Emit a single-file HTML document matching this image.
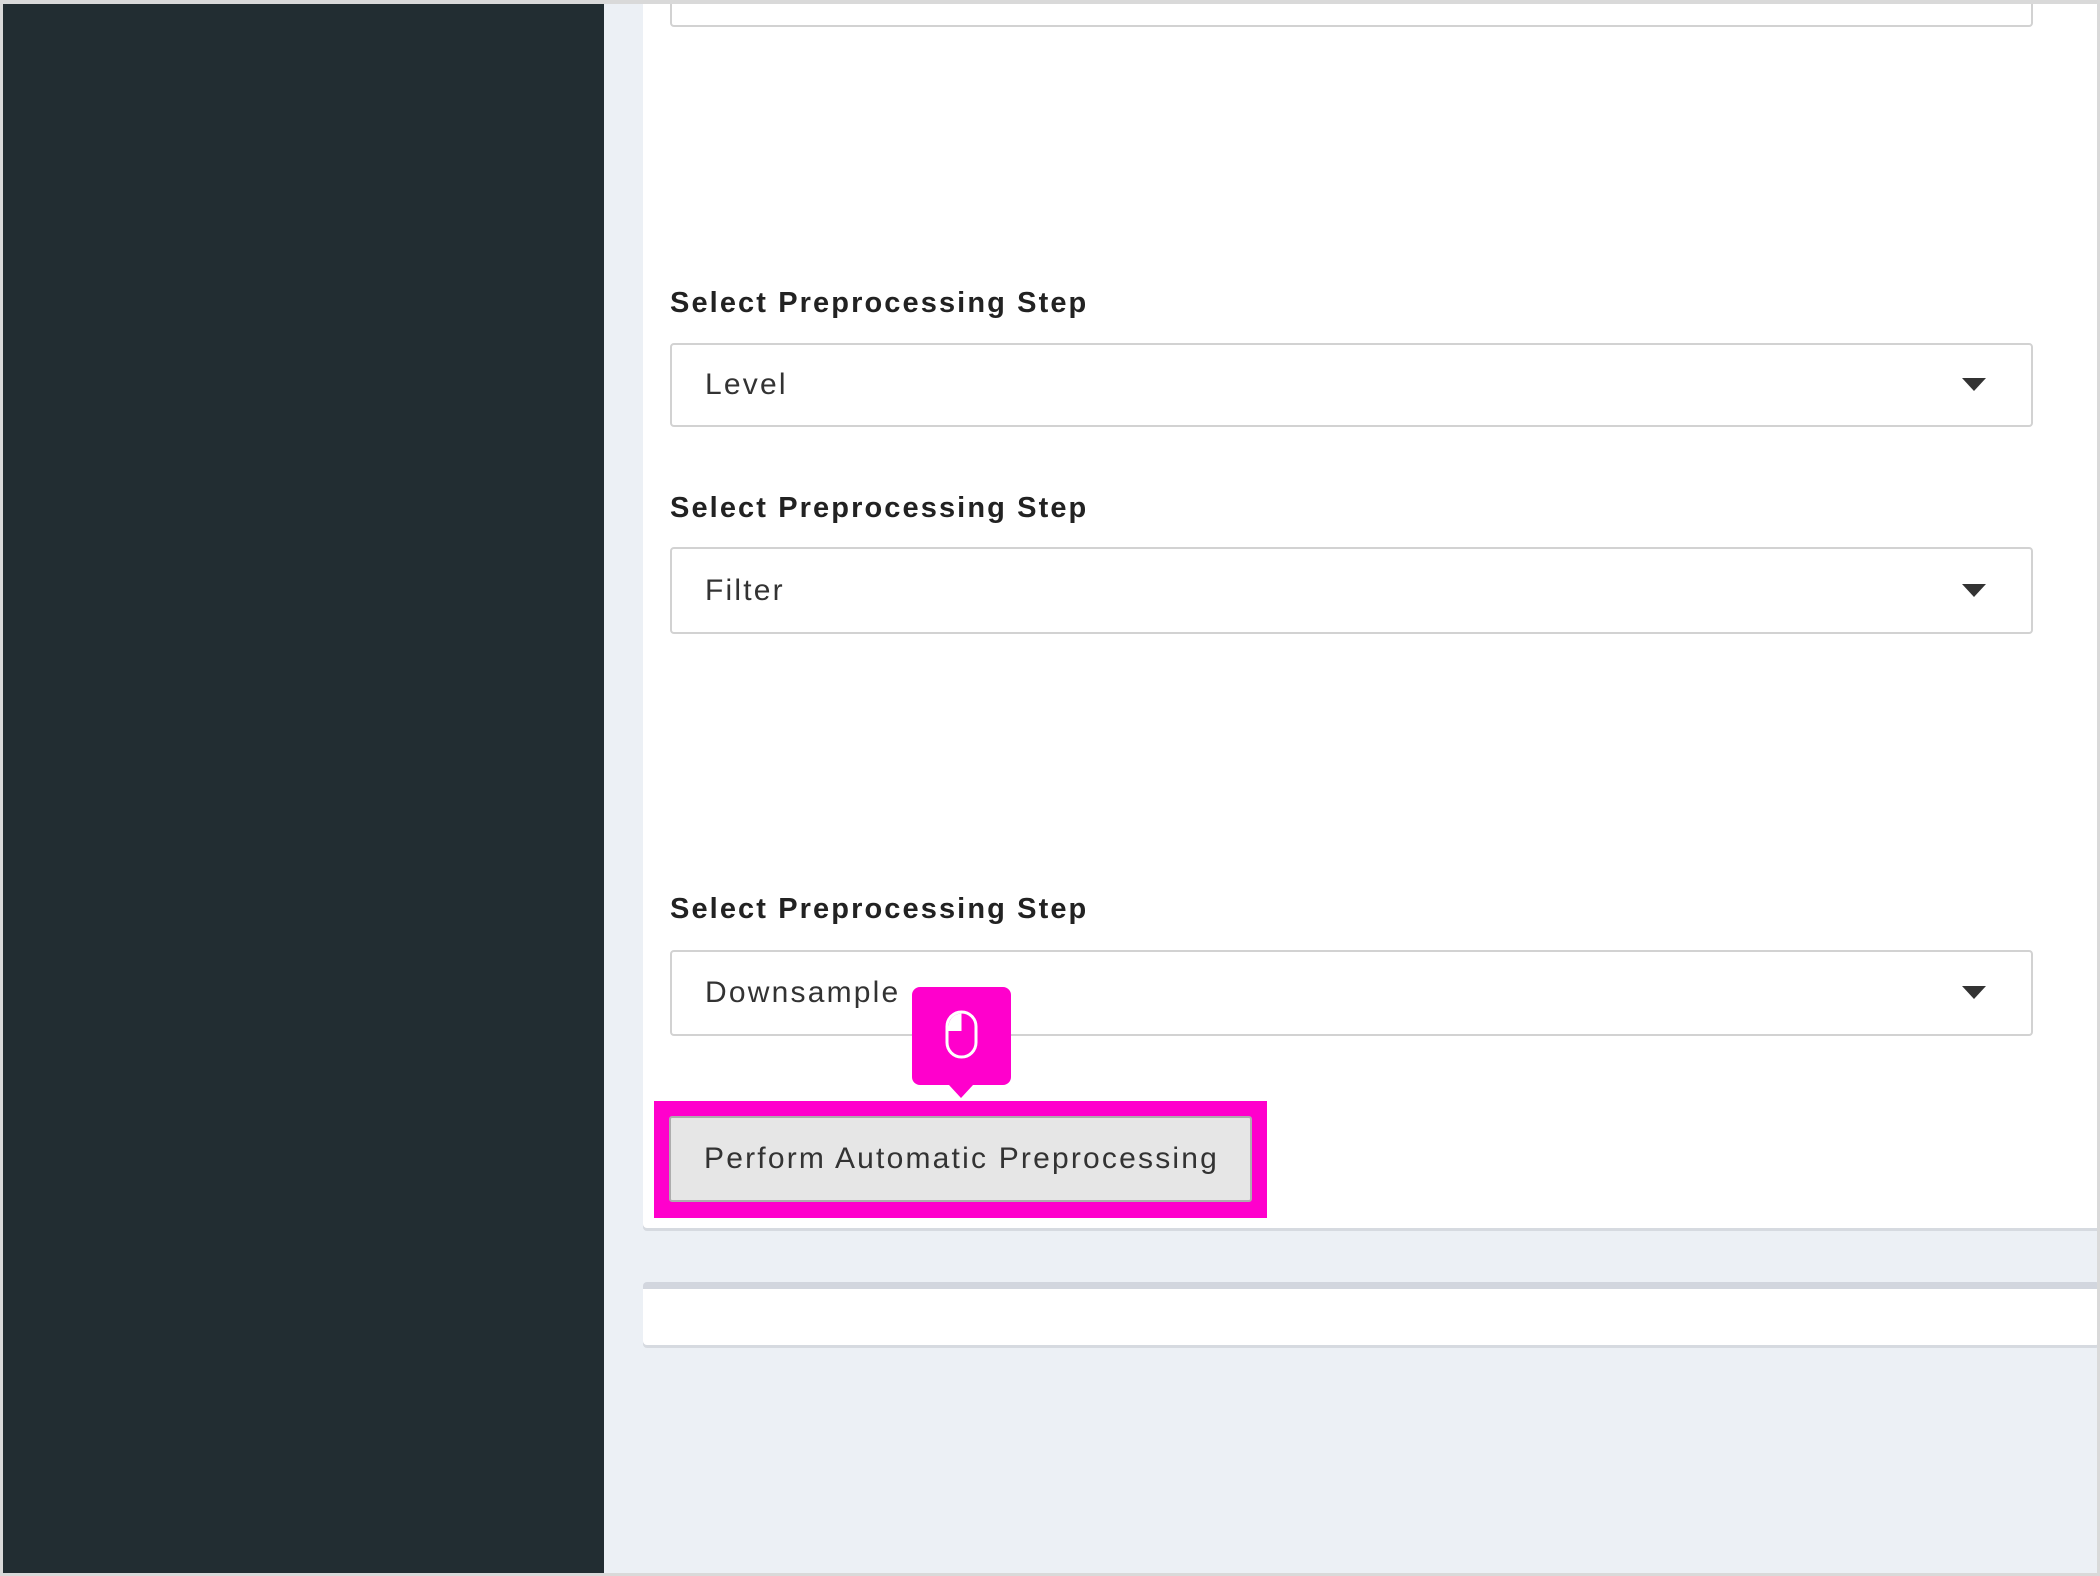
<!DOCTYPE html>
<html><head><meta charset="utf-8"><style>
*{margin:0;padding:0;box-sizing:border-box}
body{width:2100px;height:1576px;position:relative;overflow:hidden;background:#ecf0f5;font-family:"Liberation Sans",sans-serif;color:#333}
.frame{position:absolute;inset:0;border:3px solid #d9d9d9;border-top-width:4px;pointer-events:none;z-index:10}
.side{position:absolute;left:0;top:0;width:604px;height:1576px;background:#222d32}
.panel{position:absolute;left:643px;top:0;width:1457px;height:1228px;background:#fff;border-bottom-left-radius:4px;box-shadow:0 3px 0 #d6dae0}
.box2{position:absolute;left:643px;top:1282px;width:1457px;height:63px;background:#fff;border-top:7px solid #d2d6de;border-radius:4px;box-shadow:0 3px 0 #d6dae0}
.inp{position:absolute;left:670px;width:1363px;border:2px solid #d2d2d2;border-radius:4px;background:#fff;font-size:30px;letter-spacing:2.2px;padding-left:33px;display:flex;align-items:center}
.inp .arr{position:absolute;right:45px;top:50%;margin-top:-7px;width:0;height:0;border-left:12px solid transparent;border-right:12px solid transparent;border-top:13px solid #333}
.lbl{position:absolute;left:670px;font-weight:bold;font-size:29px;color:#222;letter-spacing:2.1px;line-height:34px}
.pink{position:absolute;left:654px;top:1101px;width:613px;height:117px;background:#ff00cc}
.btn{position:absolute;left:669px;top:1116px;width:583px;height:86px;background:#e6e6e6;border:2px solid #adadad;border-radius:3px;font-size:30px;letter-spacing:2.2px;display:flex;align-items:center;padding-left:33px;color:#333;white-space:nowrap}
.tip{position:absolute;left:912px;top:987px;width:99px;height:98px;background:#ff00cc;border-radius:8px}
.tip:after{content:"";position:absolute;left:37px;bottom:-13px;border-left:12px solid transparent;border-right:12px solid transparent;border-top:13px solid #ff00cc}
</style></head><body>
<div class="side"></div>
<div class="panel"></div>
<div class="inp" style="top:-20px;height:47px"></div>
<div class="lbl" style="top:286px">Select Preprocessing Step</div>
<div class="inp" style="top:343px;height:84px">Level<span class="arr"></span></div>
<div class="lbl" style="top:491px">Select Preprocessing Step</div>
<div class="inp" style="top:547px;height:87px">Filter<span class="arr"></span></div>
<div class="lbl" style="top:892px">Select Preprocessing Step</div>
<div class="inp" style="top:950px;height:86px">Downsample<span class="arr"></span></div>
<div class="pink"></div>
<div class="btn">Perform Automatic Preprocessing</div>
<div class="tip"><svg width="99" height="98" viewBox="0 0 99 98"><rect x="35" y="25" width="29" height="45" rx="14.5" fill="none" stroke="#fff" stroke-width="3"/><path d="M49.5 26.5 V44 H36.5 V40 A13 13 0 0 1 49.5 26.5Z" fill="#fff"/></svg></div>
<div class="box2"></div>
<div class="frame"></div>
</body></html>
